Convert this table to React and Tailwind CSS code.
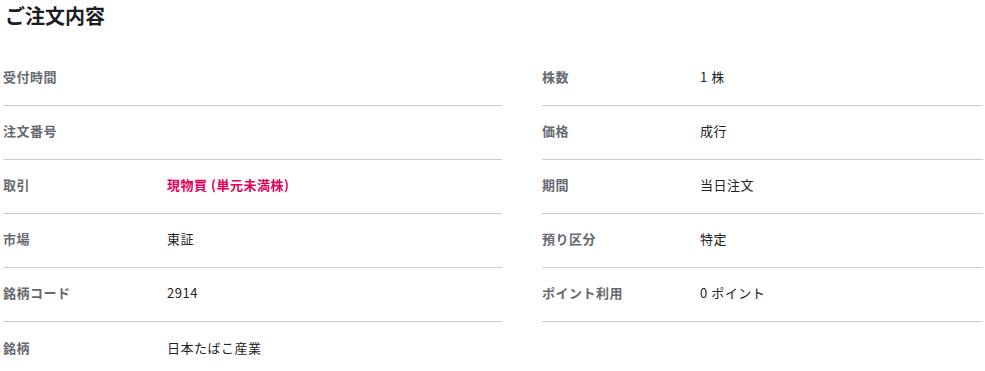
import React from 'react';

const leftRows = [
    { label: '受付時間', value: '' },
    { label: '注文番号', value: '' },
    { label: '取引', value: '現物買 (単元未満株)', accent: true },
    { label: '市場', value: '東証' },
    { label: '銘柄コード', value: '2914' },
    { label: '銘柄', value: '日本たばこ産業', last: true },
];

const rightRows = [
    { label: '株数', value: '1 株' },
    { label: '価格', value: '成行' },
    { label: '期間', value: '当日注文' },
    { label: '預り区分', value: '特定' },
    { label: 'ポイント利用', value: '0 ポイント' },
];

const Row = ({ row, labelWidth }) => (
    <div className={`flex items-center h-[54px] pb-[3px] ${row.last ? '' : 'border-b border-[#c6ccd5]'}`}>
        <div className={`${labelWidth} shrink-0 font-bold text-[#666a70]`}>{row.label}</div>
        <div className={row.accent ? 'font-bold text-[#e5005a]' : 'text-[#222]'}>{row.value}</div>
    </div>
);

const App = () => {
    return (
        <main
            className="min-h-screen bg-white px-[3px] text-[13px] tracking-[0.04em]"
            style={{ fontFamily: '"Noto Sans CJK JP", "Noto Sans", sans-serif' }}
        >
            <h1 className="pl-[2px] pt-[3px] text-[20px] font-bold leading-[26px] tracking-normal text-[#1b1d24]">ご注文内容</h1>
            <div className="mt-[23px] grid grid-cols-[499px_441px] gap-x-10 items-start">
                <div>
                    {leftRows.map(row => <Row key={row.label} row={row} labelWidth="w-[164px]" />)}
                </div>
                <div>
                    {rightRows.map(row => <Row key={row.label} row={row} labelWidth="w-[158px]" />)}
                </div>
            </div>
        </main>
    );
};

export default App;
